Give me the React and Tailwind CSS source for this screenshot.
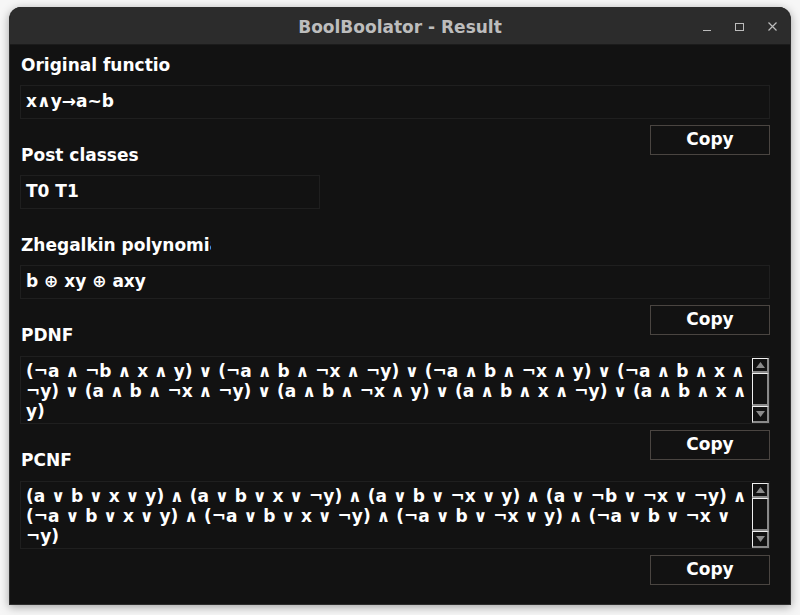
import React from "react";

const FONT = { fontFamily: '"DejaVu Sans", "Liberation Sans", sans-serif' };

function Label({ children, className = "" }) {
  return (
    <div className={"h-[20px] leading-[20px] text-[17px] font-bold text-white whitespace-nowrap " + className}>
      {children}
    </div>
  );
}

function Entry({ children, className = "" }) {
  return (
    <div className={"h-[34px] border border-[#1f1f1f] pl-[5px] flex items-center text-[17px] font-bold text-white whitespace-nowrap " + className}>
      {children}
    </div>
  );
}

function CopyBtn() {
  return (
    <div className="w-[120px] h-[30px] border border-[#4a4541] flex items-center justify-center text-[17px] font-bold text-white">
      Copy
    </div>
  );
}

function Scrollbar() {
  return (
    <div className="w-[17px] h-full flex flex-col pt-[1px]">
      <div className="h-[15px] border-t border-l border-[#f0f0f0] border-r-2 border-b-2 border-r-[#8a8a8a] border-b-[#8a8a8a] flex items-center justify-center">
        <svg width="9" height="6" viewBox="0 0 9 6"><polygon points="4.5,0 9,6 0,6" fill="#8c8c8c" /></svg>
      </div>
      <div className="flex-1 border-t border-l border-[#f0f0f0] border-r-2 border-b-2 border-r-[#8a8a8a] border-b-[#8a8a8a]"></div>
      <div className="h-[17px] border-t border-l border-[#f0f0f0] border-r-2 border-b-2 border-r-[#8a8a8a] border-b-[#8a8a8a] flex items-center justify-center">
        <svg width="9" height="6" viewBox="0 0 9 6"><polygon points="0,0 9,0 4.5,6" fill="#8c8c8c" /></svg>
      </div>
    </div>
  );
}

function TextBox({ lines }) {
  return (
    <div className="h-[68px] border border-[#1f1f1f] flex">
      <div className="flex-1 pl-[5px] pt-[4px] overflow-hidden">
        {lines.map((l, i) => (
          <div key={i} className="h-[20px] leading-[20px] text-[17px] font-bold text-white whitespace-nowrap">
            {l}
          </div>
        ))}
      </div>
      <Scrollbar />
    </div>
  );
}

export default function App() {
  return (
    <div className="w-[800px] h-[615px] bg-[#f6f6f6] overflow-hidden pt-[7px] pl-[9px]" style={FONT}>
      <div className="w-[782px] h-[598px] rounded-t-[12px] overflow-hidden flex flex-col shadow-[0_2px_10px_rgba(0,0,0,0.35)] bg-[#121212] border-x border-b border-[#2e2e2e]">
        {/* Title bar */}
        <div className="h-[38px] bg-[#2c2c2c] border-b border-[#1b1b1b] relative flex items-center justify-center pt-[5px]">
          <span className="text-[17px] font-bold text-[#bdbdbd]">BoolBoolator - Result</span>
          <div className="absolute right-[13px] top-[15px] flex items-center gap-[24px]">
            <div className="w-[8px] h-[8px] flex items-end"><div className="w-[8px] h-[1px] bg-[#bcbcbc]"></div></div>
            <div className="w-[9px] h-[8px] border border-[#bcbcbc]"></div>
            <svg width="9" height="9" viewBox="0 0 9 9"><path d="M0.5 0.5 L8.5 8.5 M8.5 0.5 L0.5 8.5" stroke="#bcbcbc" strokeWidth="1.2" /></svg>
          </div>
        </div>
        {/* Body */}
        <div className="flex-1 pl-[10px] pr-[20px] pt-[10px] flex flex-col">
          <Label className="pl-[1px]">Original functio</Label>
          <Entry className="mt-[10px]">x∧y→a~b</Entry>
          <div className="mt-[6px] h-[40px] flex justify-between items-start">
            <Label className="self-end pl-[1px]">Post classes</Label>
            <CopyBtn />
          </div>
          <Entry className="mt-[10px] w-[300px]">T0 T1</Entry>
          <div className="mt-[26px] w-[191px] overflow-hidden">
            <Label className="pl-[1px]">Zhegalkin polynomial</Label>
          </div>
          <Entry className="mt-[10px]">b ⊕ xy ⊕ axy</Entry>
          <div className="mt-[6px] h-[40px] flex justify-between items-start">
            <Label className="self-end pl-[1px]">PDNF</Label>
            <CopyBtn />
          </div>
          <div className="mt-[11px]">
            <TextBox
              lines={[
                "(¬a ∧ ¬b ∧ x ∧ y) ∨ (¬a ∧ b ∧ ¬x ∧ ¬y) ∨ (¬a ∧ b ∧ ¬x ∧ y) ∨ (¬a ∧ b ∧ x ∧",
                "¬y) ∨ (a ∧ b ∧ ¬x ∧ ¬y) ∨ (a ∧ b ∧ ¬x ∧ y) ∨ (a ∧ b ∧ x ∧ ¬y) ∨ (a ∧ b ∧ x ∧",
                "y)",
              ]}
            />
          </div>
          <div className="mt-[6px] h-[40px] flex justify-between items-start">
            <Label className="self-end pl-[1px]">PCNF</Label>
            <CopyBtn />
          </div>
          <div className="mt-[11px]">
            <TextBox
              lines={[
                "(a ∨ b ∨ x ∨ y) ∧ (a ∨ b ∨ x ∨ ¬y) ∧ (a ∨ b ∨ ¬x ∨ y) ∧ (a ∨ ¬b ∨ ¬x ∨ ¬y) ∧",
                "(¬a ∨ b ∨ x ∨ y) ∧ (¬a ∨ b ∨ x ∨ ¬y) ∧ (¬a ∨ b ∨ ¬x ∨ y) ∧ (¬a ∨ b ∨ ¬x ∨",
                "¬y)",
              ]}
            />
          </div>
          <div className="mt-[6px] flex justify-end">
            <CopyBtn />
          </div>
        </div>
      </div>
    </div>
  );
}
